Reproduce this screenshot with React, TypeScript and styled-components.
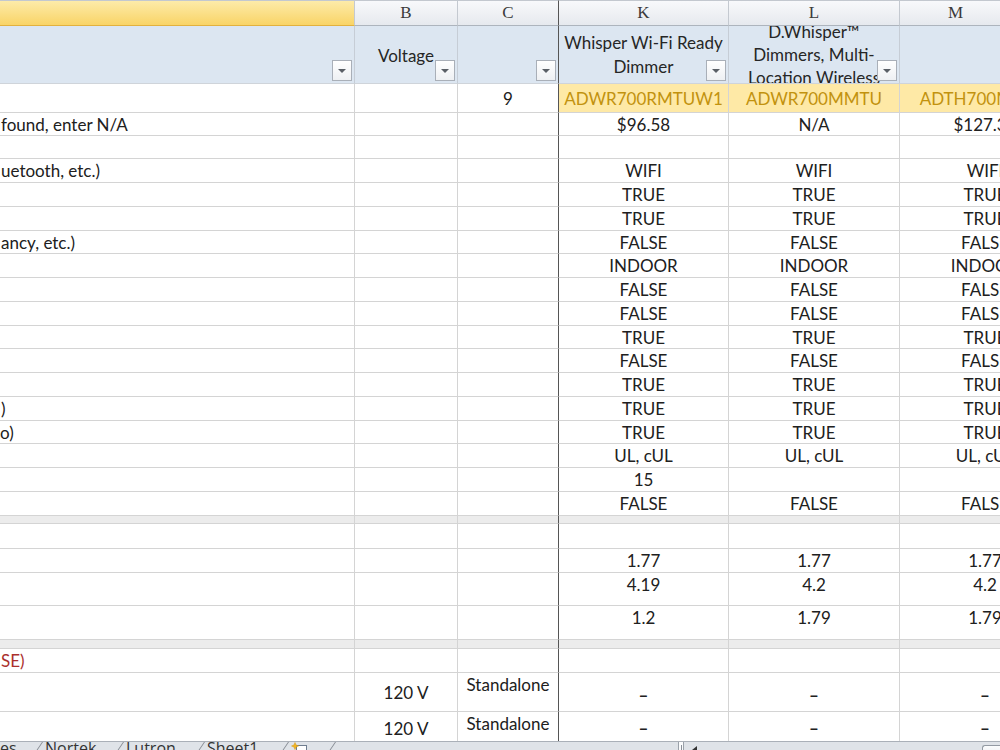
import React from 'react'
import styled, { createGlobalStyle } from 'styled-components'

const GlobalStyle = createGlobalStyle`
  html, body {
    margin: 0;
    padding: 0;
    background: #fff;
    overflow: hidden;
  }
  body {
    font-family: Lato, 'Noto Sans', sans-serif;
  }
`

type Tone = 'plain' | 'neutral' | 'bad' | 'band'
type VAlign = 'top' | 'center' | 'bottom'

type CellData = {
  t?: string
  left?: boolean
  v?: VAlign
  tone?: Tone
  shift?: number
  strong?: boolean
}

type RowData = {
  h: number
  cells: CellData[]
}

const COLS = [355, 103, 101, 170, 171, 171]
const FROZEN_COL = 2
const GRID = '#d4d4d4'
const FREEZE = '#555'

const Window = styled.div`
  width: 1000px;
  height: 750px;
  overflow: hidden;
  display: flex;
  flex-direction: column;
  background: #fff;
`
const SheetArea = styled.div`
  flex: none;
  height: 741px;
  overflow: hidden;
`
const Grid = styled.div<{ $rows: number[] }>`
  display: grid;
  grid-template-columns: ${COLS.map((c) => c + 'px').join(' ')};
  grid-template-rows: ${(p) => p.$rows.map((h) => h + 'px').join(' ')};
  width: ${COLS.reduce((a, b) => a + b, 0)}px;
`
const ColHead = styled.div<{ $selected?: boolean; $frozen?: boolean; $padRight?: number }>`
  box-sizing: border-box;
  display: flex;
  align-items: center;
  justify-content: center;
  padding-right: ${(p) => p.$padRight ?? 0}px;
  font-family: 'Liberation Serif', 'DejaVu Serif', serif;
  font-size: 17px;
  color: #3a3a3a;
  background: ${(p) =>
    p.$selected
      ? 'linear-gradient(#fdeba9, #f9d467)'
      : 'linear-gradient(#f8f9fb, #e6e9ee)'};
  border-top: 1px solid #c3c8cf;
  border-right: 1px solid ${(p) => (p.$frozen ? FREEZE : '#c4c9d0')};
  border-bottom: 1px solid ${(p) => (p.$selected ? '#e2b13e' : '#adb4bd')};
`
const HeadCell = styled.div<{ $frozen?: boolean }>`
  position: relative;
  box-sizing: border-box;
  background: #dce6f1;
  border-right: 1px solid ${(p) => (p.$frozen ? FREEZE : '#c6cdd6')};
  border-bottom: 1px solid #cfd4da;
  display: flex;
  align-items: center;
  justify-content: center;
  text-align: center;
  overflow: hidden;
  padding: 0 3px;
  font-size: 17px;
  color: #262626;
`
const HeadText = styled.div<{ $lh: number }>`
  line-height: ${(p) => p.$lh}px;
  white-space: nowrap;
`
const FilterBtn = styled.span`
  position: absolute;
  right: 2px;
  bottom: 2px;
  width: 20px;
  height: 21px;
  box-sizing: border-box;
  border: 1px solid #a9afb8;
  background: linear-gradient(#ffffff, #eef0f3);
  display: flex;
  align-items: center;
  justify-content: center;
  &::after {
    content: '';
    border-left: 4px solid transparent;
    border-right: 4px solid transparent;
    border-top: 4px solid #5a5f66;
  }
`
const vMap: Record<VAlign, string> = { top: 'flex-start', center: 'center', bottom: 'flex-end' }

const Cell = styled.div<{
  $tone: Tone
  $v: VAlign
  $left?: boolean
  $frozen?: boolean
  $shift?: number
  $strong?: boolean
}>`
  box-sizing: border-box;
  display: flex;
  align-items: ${(p) => vMap[p.$v]};
  justify-content: ${(p) => (p.$left ? 'flex-start' : 'center')};
  padding: ${(p) => (p.$left ? `0 0 0 ${p.$shift ?? 1}px` : '0 3px')};
  padding-top: ${(p) => (p.$v === 'center' ? 1 : 0)}px;
  padding-bottom: ${(p) => (p.$v === 'bottom' ? 4 : 0)}px;
  overflow: hidden;
  white-space: nowrap;
  font-size: 17px;
  font-weight: ${(p) => (p.$strong ? 700 : 400)};
  line-height: 24px;
  border-right: 1px solid ${(p) => (p.$frozen ? FREEZE : GRID)};
  border-bottom: 1px solid ${GRID};
  background: ${(p) =>
    p.$tone === 'neutral' ? '#fee9a6' : p.$tone === 'band' ? '#ececec' : '#fff'};
  color: ${(p) =>
    p.$tone === 'neutral' ? '#c2920e' : p.$tone === 'bad' ? '#ab302d' : '#202020'};
`

const TabBar = styled.div`
  flex: none;
  height: 24px;
  display: flex;
  align-items: stretch;
  background: #dfe3e8;
  border-top: 1px solid #aab0b8;
  font-family: 'Open Sans', 'Liberation Sans', sans-serif;
  font-size: 16px;
  color: #333;
`
const Tab = styled.div<{ $w: number; $first?: boolean }>`
  position: relative;
  flex: none;
  width: ${(p) => p.$w}px;
  box-sizing: border-box;
  padding-left: ${(p) => (p.$first ? 0 : 3)}px;
  line-height: 12px;
  white-space: nowrap;
  &::before {
    content: '';
    display: ${(p) => (p.$first ? 'none' : 'block')};
    position: absolute;
    left: 0;
    top: 0;
    bottom: 0;
    border-left: 1px solid #858b93;
    transform-origin: top left;
    transform: skewX(-34deg);
  }
`
const Splitter = styled.div`
  flex: none;
  width: 6px;
  box-sizing: border-box;
  background: #fafbfc;
  border: 1px solid #9aa1a9;
  border-top: none;
  display: flex;
  justify-content: center;
  &::after {
    content: '';
    width: 1px;
    margin-top: 3px;
    height: 10px;
    background: #8a9099;
  }
`
const ScrollTrack = styled.div`
  flex: 1;
  display: flex;
  align-items: flex-start;
`
const ArrowLeft = styled.span`
  margin: 4px 0 0 8px;
  border-top: 4px solid transparent;
  border-bottom: 4px solid transparent;
  border-right: 5px solid #333;
`
const Thumb = styled.span`
  margin: 3px 0 0 auto;
  width: 18px;
  height: 14px;
  box-sizing: border-box;
  border: 1px solid #939aa3;
  border-right: none;
  border-radius: 3px 0 0 0;
  background: linear-gradient(#fbfcfd, #e6e9ed);
`

const NewSheetIcon = () => (
  <svg width="17" height="14" viewBox="0 0 17 14">
    <rect x="5.5" y="3.5" width="10" height="10" fill="#fff" stroke="#6f7d8f" />
    <path d="M4 0.5 L5 3 L7.5 4 L5 5 L4 7.5 L3 5 L0.5 4 L3 3 Z" fill="#f3b51c" stroke="#d8960e" strokeWidth="0.5" />
  </svg>
)

const spec = (a: string, k: string, l: string, m: string, h: number, v: VAlign = 'center'): RowData => ({
  h,
  cells: [
    { t: a, left: true, shift: a === 'o)' ? -3 : 1 },
    {},
    {},
    { t: k, v },
    { t: l, v },
    { t: m, v },
  ],
})

const band = (h: number): RowData => ({
  h,
  cells: Array.from({ length: 6 }, () => ({ tone: 'band' as Tone })),
})

const featureRows: [string, string, string, string][] = [
  ['uetooth, etc.)', 'WIFI', 'WIFI', 'WIFI'],
  ['', 'TRUE', 'TRUE', 'TRUE'],
  ['', 'TRUE', 'TRUE', 'TRUE'],
  ['ancy, etc.)', 'FALSE', 'FALSE', 'FALSE'],
  ['', 'INDOOR', 'INDOOR', 'INDOOR'],
  ['', 'FALSE', 'FALSE', 'FALSE'],
  ['', 'FALSE', 'FALSE', 'FALSE'],
  ['', 'TRUE', 'TRUE', 'TRUE'],
  ['', 'FALSE', 'FALSE', 'FALSE'],
  ['', 'TRUE', 'TRUE', 'TRUE'],
  [')', 'TRUE', 'TRUE', 'TRUE'],
  ['o)', 'TRUE', 'TRUE', 'TRUE'],
  ['', 'UL, cUL', 'UL, cUL', 'UL, cUL'],
  ['', '15', '', ''],
  ['', 'FALSE', 'FALSE', 'FALSE'],
]

const dash: CellData = { t: '–', v: 'bottom', strong: true }

const voltageRow = (h: number): RowData => ({
  h,
  cells: [{}, { t: '120 V' }, { t: 'Standalone', v: 'top' }, dash, dash, dash],
})

const dataRows: RowData[] = [
  {
    h: 29,
    cells: [
      {},
      {},
      { t: '9' },
      { t: 'ADWR700RMTUW1', tone: 'neutral' },
      { t: 'ADWR700MMTU', tone: 'neutral' },
      { t: 'ADTH700MMTU', tone: 'neutral' },
    ],
  },
  spec('found, enter N/A', '$96.58', 'N/A', '$127.38', 23),
  spec('', '', '', '', 23),
  ...featureRows.map((r, i) => spec(r[0], r[1], r[2], r[3], i % 4 === 3 ? 23 : 24)),
  band(8),
  spec('', '', '', '', 25),
  spec('', '1.77', '1.77', '1.77', 24),
  spec('', '4.19', '4.2', '4.2', 33, 'top'),
  spec('', '1.2', '1.79', '1.79', 34, 'top'),
  band(9),
  { h: 24, cells: [{ t: 'SE)', left: true, tone: 'bad' }] },
  voltageRow(39),
  voltageRow(33),
]

const letters = ['', 'B', 'C', 'K', 'L', 'M']

export default function App() {
  const rowHeights = [26, 58, ...dataRows.map((r) => r.h)]
  return (
    <>
      <GlobalStyle />
      <Window>
        <SheetArea>
          <Grid $rows={rowHeights}>
            {letters.map((l, i) => (
              <ColHead key={'col' + i} $selected={i === 0} $frozen={i === FROZEN_COL} $padRight={i === 5 ? 59 : 0}>
                {l}
              </ColHead>
            ))}

            <HeadCell>
              <FilterBtn />
            </HeadCell>
            <HeadCell>
              <HeadText $lh={24} style={{ marginTop: 2 }}>Voltage</HeadText>
              <FilterBtn />
            </HeadCell>
            <HeadCell $frozen>
              <FilterBtn />
            </HeadCell>
            <HeadCell>
              <HeadText $lh={24}>
                Whisper Wi-Fi Ready
                <br />
                Dimmer
              </HeadText>
              <FilterBtn />
            </HeadCell>
            <HeadCell>
              <HeadText $lh={23}>
                D.Whisper™
                <br />
                Dimmers, Multi-
                <br />
                Location Wireless
              </HeadText>
              <FilterBtn />
            </HeadCell>
            <HeadCell>
              <FilterBtn />
            </HeadCell>

            {dataRows.flatMap((row, ri) =>
              COLS.map((_, ci) => {
                const c = row.cells[ci] ?? {}
                return (
                  <Cell
                    key={ri + '-' + ci}
                    $tone={c.tone ?? 'plain'}
                    $v={c.v ?? 'center'}
                    $left={c.left}
                    $shift={c.shift}
                    $strong={c.strong}
                    $frozen={ci === FROZEN_COL}
                  >
                    {c.t}
                  </Cell>
                )
              })
            )}
          </Grid>
        </SheetArea>
        <TabBar>
          <Tab $w={42} $first>
            es
          </Tab>
          <Tab $w={81}>Nortek</Tab>
          <Tab $w={81}>Lutron</Tab>
          <Tab $w={84}>Sheet1</Tab>
          <Tab $w={47}>
            <NewSheetIcon />
          </Tab>
          <Tab $w={343} />
          <Splitter />
          <ScrollTrack>
            <ArrowLeft />
            <Thumb />
          </ScrollTrack>
        </TabBar>
      </Window>
    </>
  )
}
